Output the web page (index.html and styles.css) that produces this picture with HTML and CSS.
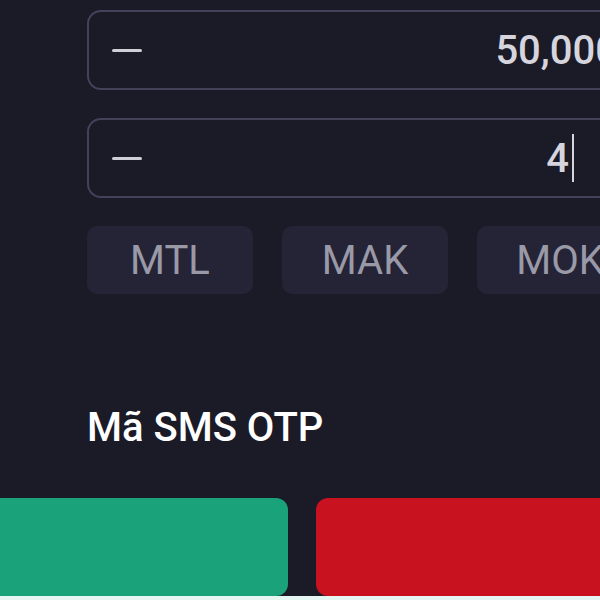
FILE: index.html
```html
<!DOCTYPE html>
<html lang="vi">
<head>
    <meta charset="UTF-8">
    <meta name="viewport" content="width=device-width, initial-scale=1.0">
    <title>Đặt lệnh</title>
    <link rel="stylesheet" href="styles.css">
</head>
<body>
    <div class="order-panel">
        <div class="field field-price">
            <span class="minus"></span>
            <span class="field-value">50,000</span>
        </div>

        <div class="field field-qty">
            <span class="minus"></span>
            <span class="field-value">4<span class="caret"></span></span>
        </div>

        <div class="chips">
            <button class="chip">MTL</button>
            <button class="chip">MAK</button>
            <button class="chip">MOK</button>
        </div>

        <div class="otp-label">Mã SMS OTP</div>

        <div class="actions">
            <button class="btn btn-buy"></button>
            <button class="btn btn-sell"></button>
        </div>
    </div>
    <div class="bottom-strip"></div>
</body>
</html>
```

FILE: styles.css
```css
/* order panel */

body {
    margin: 0;
    padding: 0;
    width: 600px;
    height: 600px;
    overflow: hidden;
    background-color: #1b1a27;
    font-family: Roboto, "Noto Sans", Arial, sans-serif;
}

.order-panel {
    width: 640px;
    padding: 10px 0 0 87px;
}

.field {
    box-sizing: border-box;
    display: flex;
    align-items: center;
    width: 560px;
    height: 80px;
    padding: 0 0 0 23px;
    margin-bottom: 28px;
    border: 2px solid #43425a;
    border-radius: 14px;
    color: #d6d5de;
    font-size: 40px;
    font-weight: 500;
}

.minus {
    display: block;
    width: 30px;
    height: 3px;
    background-color: #cfcfd8;
    border-radius: 2px;
}

.field-value {
    margin-left: auto;
    display: flex;
    align-items: center;
}

.field-price .field-value {
    margin-right: 27px;
}

.field-qty .field-value {
    margin-right: 71px;
}

.caret {
    display: block;
    width: 2px;
    height: 48px;
    margin-left: 3px;
    background-color: #d6d5de;
}

.chips {
    display: flex;
    gap: 29px;
}

.chip {
    flex: none;
    width: 166px;
    height: 68px;
    border: none;
    border-radius: 10px;
    background-color: #252436;
    color: #9a99a8;
    font-family: inherit;
    font-size: 40px;
    padding: 0;
}

.otp-label {
    margin-top: 110px;
    color: #ffffff;
    font-size: 40px;
    font-weight: 500;
    line-height: 48px;
}

.actions {
    display: flex;
    gap: 28px;
    margin-top: 46px;
    margin-left: -147px;
}

.btn {
    flex: none;
    width: 348px;
    height: 98px;
    border: none;
    border-radius: 12px;
}

.btn-buy {
    background-color: #1aa37b;
}

.btn-sell {
    background-color: #c8121f;
}

.bottom-strip {
    height: 6px;
    background-color: #e6f6f2;
}
```
